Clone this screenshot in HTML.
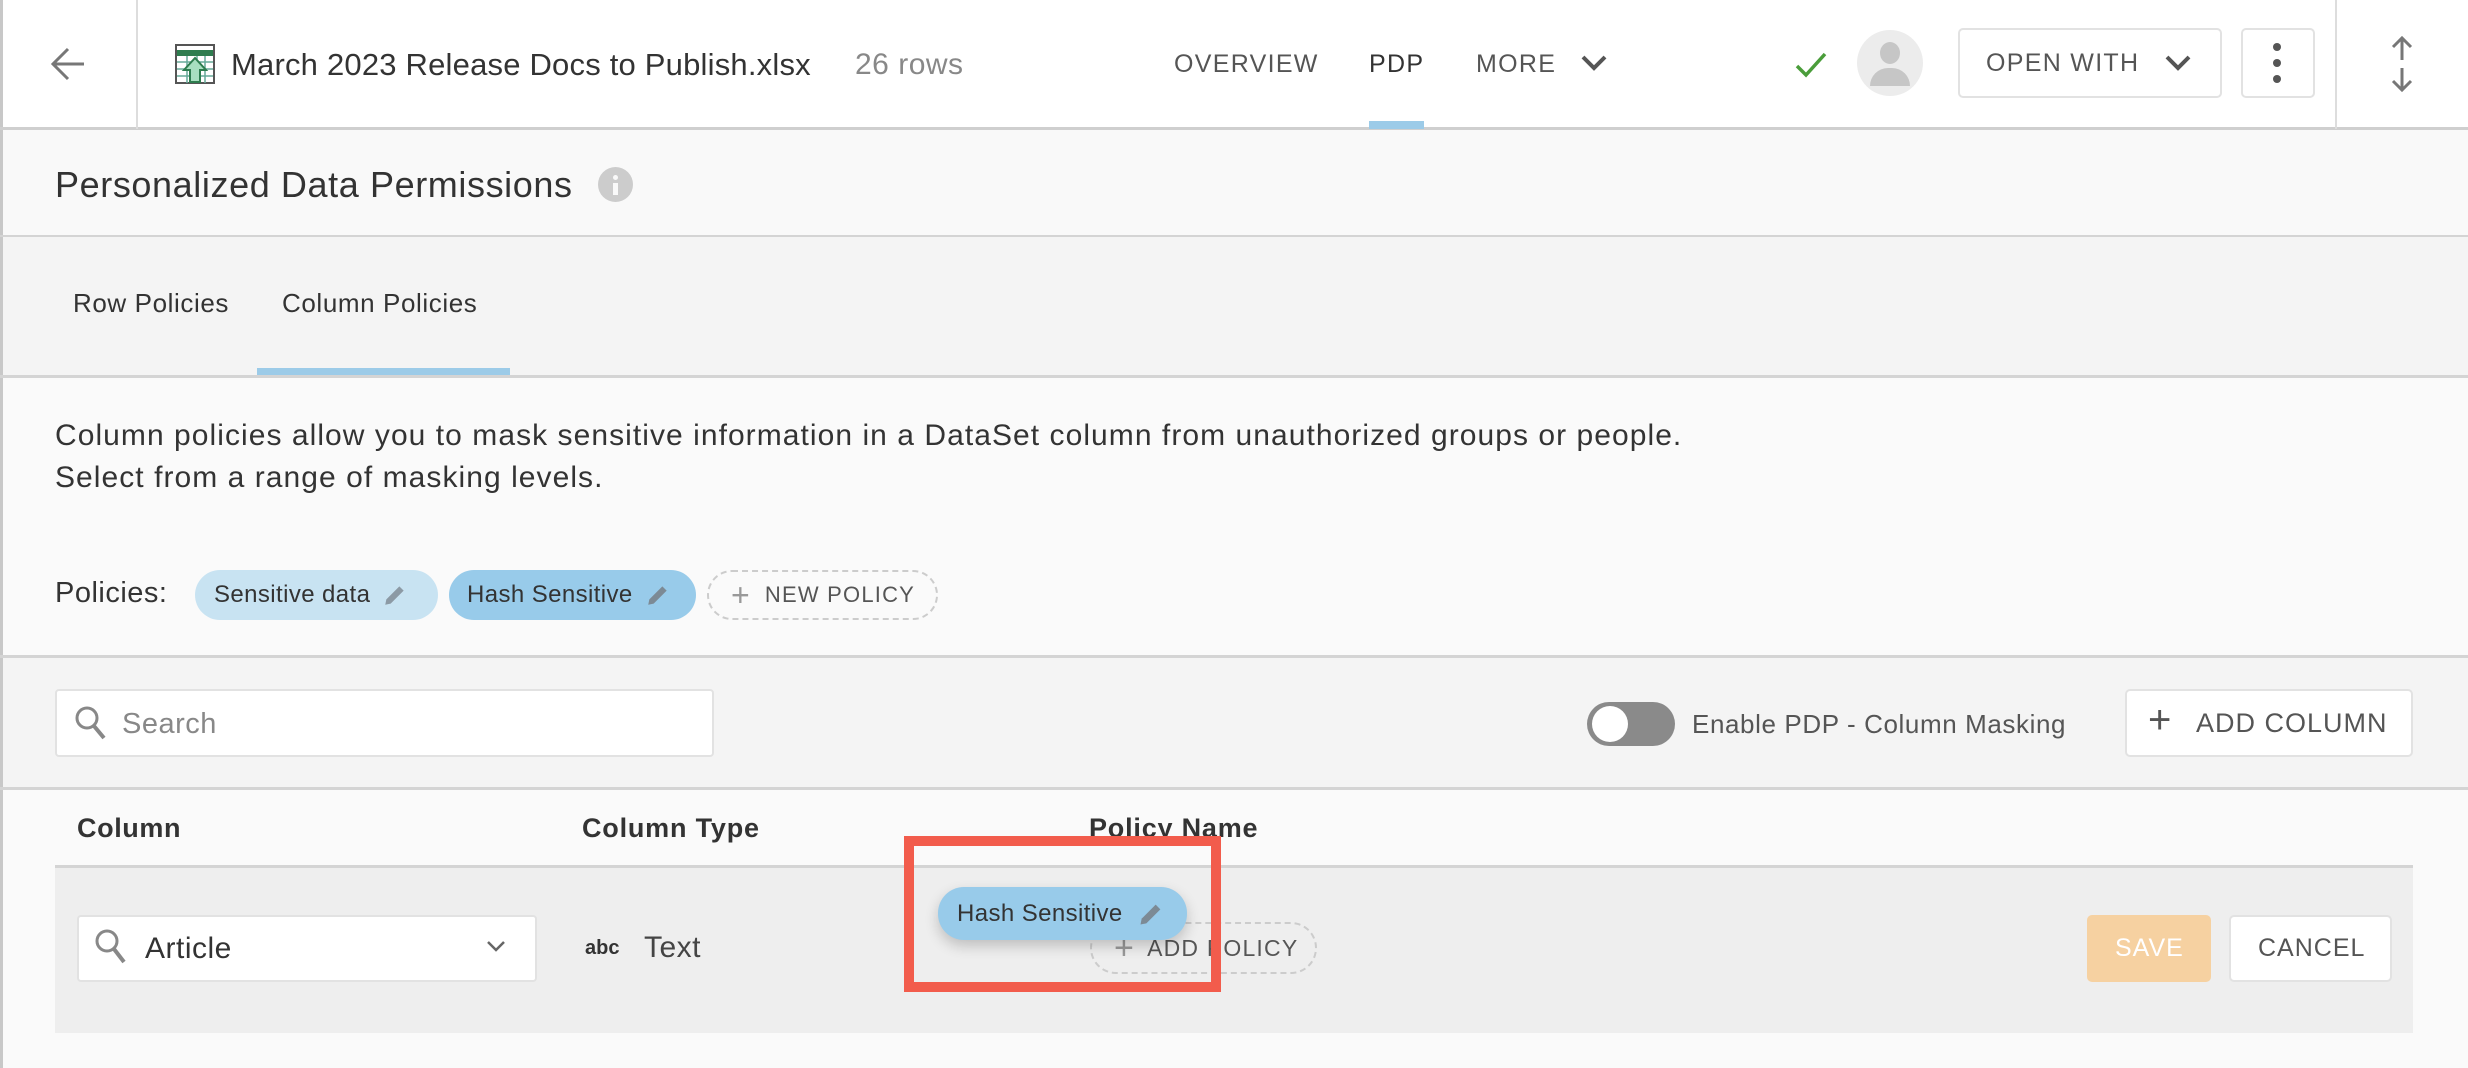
<!DOCTYPE html>
<html><head><meta charset="utf-8">
<style>
*{box-sizing:border-box;margin:0;padding:0}
body{width:2468px;height:1068px;overflow:hidden;background:#fafafa;font-family:"Liberation Sans",sans-serif;color:#333;position:relative}
.a{position:absolute}
.t{position:absolute;white-space:nowrap;line-height:1}
.btn{position:absolute;border:2px solid #e2e2e2;border-radius:5px;background:#fff}
.pill{position:absolute;border-radius:26px;display:flex;align-items:center}
</style></head><body>
<div class="a" style="left:0;top:0;width:3px;height:1068px;background:#c8c8c8"></div>
<div class="a" style="left:3px;top:0;width:2465px;height:129px;background:#fff"></div>
<div class="a" style="left:0;top:127px;width:2468px;height:3px;background:#cfcfcf"></div>
<div class="a" style="left:136px;top:0;width:2px;height:129px;background:#ddd"></div>
<div class="a" style="left:2335px;top:0;width:2px;height:129px;background:#ddd"></div>
<svg class="a" style="left:48px;top:44px" width="40" height="40" viewBox="0 0 40 40"><path d="M36 20H6M20 5L5 20l15 15" fill="none" stroke="#777" stroke-width="3"/></svg>
<svg class="a" style="left:175px;top:44px" width="42" height="42" viewBox="0 0 42 42"><rect x="1" y="1" width="38" height="38" fill="#fff" stroke="#555" stroke-width="2"/><rect x="2" y="6" width="36" height="6" fill="#2e7d4f"/><g stroke="#6a9" stroke-width="1.5"><path d="M2 18h36M2 25h36M2 32h36M12 12v27M22 12v27M30 12v27"/></g><path d="M20 14l-11 12h6v12h10V26h6z" fill="#a8dfc0" stroke="#2e7d4f" stroke-width="2"/></svg>
<div class="t" style="left:231px;top:49px;font-size:31px;color:#333;letter-spacing:0.2px">March 2023 Release Docs to Publish.xlsx</div>
<div class="t" style="left:855px;top:50px;font-size:30px;color:#888;letter-spacing:0.5px">26 rows</div>
<div class="t" style="left:1174px;top:52px;font-size:25px;color:#555;letter-spacing:1.3px">OVERVIEW</div>
<div class="t" style="left:1369px;top:52px;font-size:25px;color:#333;letter-spacing:1.3px">PDP</div>
<div class="a" style="left:1369px;top:121px;width:55px;height:8px;background:#9ccbe8"></div>
<div class="t" style="left:1476px;top:52px;font-size:25px;color:#555;letter-spacing:1.3px">MORE</div>
<svg class="a" style="left:1580px;top:52px" width="28" height="22" viewBox="0 0 28 22"><path d="M3 5l11 11L25 5" fill="none" stroke="#555" stroke-width="4"/></svg>
<svg class="a" style="left:1794px;top:50px" width="34" height="30" viewBox="0 0 34 30"><path d="M3 16l9 9L31 4" fill="none" stroke="#4a9d3a" stroke-width="3.5"/></svg>
<div class="a" style="left:1857px;top:30px;width:66px;height:66px;border-radius:50%;background:#ececec"></div>
<div class="a" style="left:1880px;top:42px;width:20px;height:22px;border-radius:50%;background:#c6c6c6"></div>
<div class="a" style="left:1870px;top:68px;width:40px;height:18px;border-radius:20px 20px 0 0;background:#c6c6c6"></div>
<div class="btn" style="left:1958px;top:28px;width:264px;height:70px"></div>
<div class="t" style="left:1986px;top:51px;font-size:25px;color:#555;letter-spacing:1.3px">OPEN WITH</div>
<svg class="a" style="left:2164px;top:52px" width="28" height="22" viewBox="0 0 28 22"><path d="M3 5l11 11L25 5" fill="none" stroke="#555" stroke-width="4"/></svg>
<div class="btn" style="left:2241px;top:28px;width:74px;height:70px"></div>
<div class="a" style="left:2273px;top:43px;width:8px;height:8px;border-radius:50%;background:#555"></div>
<div class="a" style="left:2273px;top:59px;width:8px;height:8px;border-radius:50%;background:#555"></div>
<div class="a" style="left:2273px;top:75px;width:8px;height:8px;border-radius:50%;background:#555"></div>
<svg class="a" style="left:2388px;top:34px" width="28" height="60" viewBox="0 0 28 60"><path d="M14 4v22M5 13l9-9 9 9M14 34v22M5 47l9 9 9-9" fill="none" stroke="#777" stroke-width="3"/></svg>
<div class="a" style="left:3px;top:130px;width:2465px;height:106px;background:#f9f9f9"></div>
<div class="t" style="left:55px;top:167px;font-size:36px;color:#333;letter-spacing:0.6px">Personalized Data Permissions</div>
<div class="a" style="left:598px;top:167px;width:35px;height:35px;border-radius:50%;background:#ccc"></div>
<div class="a" style="left:613px;top:175px;width:5px;height:5px;background:#f9f9f9;border-radius:50%"></div>
<div class="a" style="left:613px;top:183px;width:5px;height:12px;background:#f9f9f9"></div>
<div class="a" style="left:0;top:235px;width:2468px;height:2px;background:#d4d4d4"></div>
<div class="a" style="left:3px;top:237px;width:2465px;height:138px;background:#f4f4f4"></div>
<div class="t" style="left:73px;top:290px;font-size:26px;color:#333;letter-spacing:0.6px">Row Policies</div>
<div class="t" style="left:282px;top:290px;font-size:26px;color:#333;letter-spacing:0.6px">Column Policies</div>
<div class="a" style="left:257px;top:368px;width:253px;height:8px;background:#9ccbe8"></div>
<div class="a" style="left:0;top:375px;width:2468px;height:3px;background:#d4d4d4"></div>
<div class="t" style="left:55px;top:421px;font-size:30px;color:#333;letter-spacing:1.05px">Column policies allow you to mask sensitive information in a DataSet column from unauthorized groups or people.</div>
<div class="t" style="left:55px;top:463px;font-size:30px;color:#333;letter-spacing:1.05px">Select from a range of masking levels.</div>
<div class="t" style="left:55px;top:579px;font-size:29px;color:#333;letter-spacing:0.5px">Policies:</div>
<div class="pill" style="left:195px;top:570px;width:243px;height:50px;background:#c8e3f2;padding-left:19px;font-size:24px;color:#333;letter-spacing:0.4px">Sensitive data
<svg style="margin-left:12px" width="26" height="26" viewBox="0 0 24 24"><path d="M3 21l1-5L16 4l4 4L8 20z" fill="#8c9aa5"/></svg></div>
<div class="pill" style="left:449px;top:570px;width:247px;height:50px;background:#98cbea;padding-left:18px;font-size:24px;color:#333;letter-spacing:0.4px">Hash Sensitive
<svg style="margin-left:12px" width="26" height="26" viewBox="0 0 24 24"><path d="M3 21l1-5L16 4l4 4L8 20z" fill="#7c8a95"/></svg></div>
<div class="pill" style="left:707px;top:570px;width:231px;height:50px;border:2px dashed #ccc;padding-left:22px;font-size:22px;color:#555;letter-spacing:1.2px">
<span style="font-size:32px;color:#999;margin-right:14px;font-weight:300">+</span>NEW POLICY</div>
<div class="a" style="left:0;top:655px;width:2468px;height:3px;background:#d4d4d4"></div>
<div class="a" style="left:3px;top:658px;width:2465px;height:130px;background:#f4f4f4"></div>
<div class="btn" style="left:55px;top:689px;width:659px;height:68px;border-radius:4px"></div>
<svg class="a" style="left:74px;top:705px" width="34" height="36" viewBox="0 0 34 36"><circle cx="13" cy="13" r="10" fill="none" stroke="#888" stroke-width="3"/><path d="M20 21l10 12" stroke="#888" stroke-width="4"/></svg>
<div class="t" style="left:122px;top:710px;font-size:29px;color:#888;letter-spacing:0.5px">Search</div>
<div class="a" style="left:1587px;top:702px;width:88px;height:44px;border-radius:22px;background:#8a8a8a"></div>
<div class="a" style="left:1592px;top:706px;width:36px;height:36px;border-radius:50%;background:#fff"></div>
<div class="t" style="left:1692px;top:711px;font-size:26px;color:#555;letter-spacing:0.6px">Enable PDP - Column Masking</div>
<div class="btn" style="left:2125px;top:689px;width:288px;height:68px"></div>
<div class="t" style="left:2148px;top:700px;font-size:40px;color:#555;font-weight:300">+</div>
<div class="t" style="left:2196px;top:710px;font-size:27px;color:#555;letter-spacing:1px">ADD COLUMN</div>
<div class="a" style="left:0;top:787px;width:2468px;height:3px;background:#d4d4d4"></div>
<div class="t" style="left:77px;top:815px;font-size:27px;font-weight:bold;color:#333;letter-spacing:0.6px">Column</div>
<div class="t" style="left:582px;top:815px;font-size:27px;font-weight:bold;color:#333;letter-spacing:0.8px">Column Type</div>
<div class="t" style="left:1089px;top:815px;font-size:27px;font-weight:bold;color:#333;letter-spacing:0.8px">Policy Name</div>
<div class="a" style="left:55px;top:865px;width:2358px;height:3px;background:#d4d4d4"></div>
<div class="a" style="left:55px;top:868px;width:2358px;height:165px;background:#eeeeee"></div>
<div class="btn" style="left:77px;top:915px;width:460px;height:67px;border-radius:4px"></div>
<svg class="a" style="left:94px;top:928px" width="34" height="38" viewBox="0 0 34 38"><circle cx="13" cy="13" r="10" fill="none" stroke="#888" stroke-width="3"/><path d="M20 21l10 13" stroke="#888" stroke-width="4"/></svg>
<div class="t" style="left:145px;top:934px;font-size:30px;color:#333;letter-spacing:0.5px">Article</div>
<svg class="a" style="left:485px;top:938px" width="22" height="16" viewBox="0 0 22 16"><path d="M3 4l8 8 8-8" fill="none" stroke="#666" stroke-width="2.5"/></svg>
<div class="t" style="left:585px;top:938px;font-size:20px;font-weight:bold;color:#333">abc</div>
<div class="t" style="left:644px;top:933px;font-size:30px;color:#444;letter-spacing:0.5px">Text</div>
<div class="pill" style="left:1090px;top:922px;width:227px;height:52px;border:2px dashed #ccc;padding-left:22px;font-size:23px;color:#555;letter-spacing:1.2px">
<span style="font-size:34px;color:#999;margin-right:12px;font-weight:300">+</span>ADD POLICY</div>
<div class="pill" style="left:938px;top:887px;width:249px;height:53px;background:#98cbea;padding-left:19px;font-size:24px;color:#333;letter-spacing:0.4px;box-shadow:0 6px 14px rgba(0,0,0,0.2)">Hash Sensitive
<svg style="margin-left:14px" width="28" height="28" viewBox="0 0 24 24"><path d="M3 21l1-5L16 4l4 4L8 20z" fill="#7c8a95"/></svg></div>
<div class="a" style="left:904px;top:836px;width:317px;height:156px;border:10px solid #f25c4c"></div>
<div class="a" style="left:2087px;top:915px;width:124px;height:67px;border-radius:5px;background:#f6d1a1"></div>
<div class="t" style="left:2115px;top:936px;font-size:25px;color:#fff;letter-spacing:1px">SAVE</div>
<div class="btn" style="left:2229px;top:915px;width:163px;height:67px"></div>
<div class="t" style="left:2258px;top:936px;font-size:25px;color:#555;letter-spacing:1px">CANCEL</div>
</body></html>
